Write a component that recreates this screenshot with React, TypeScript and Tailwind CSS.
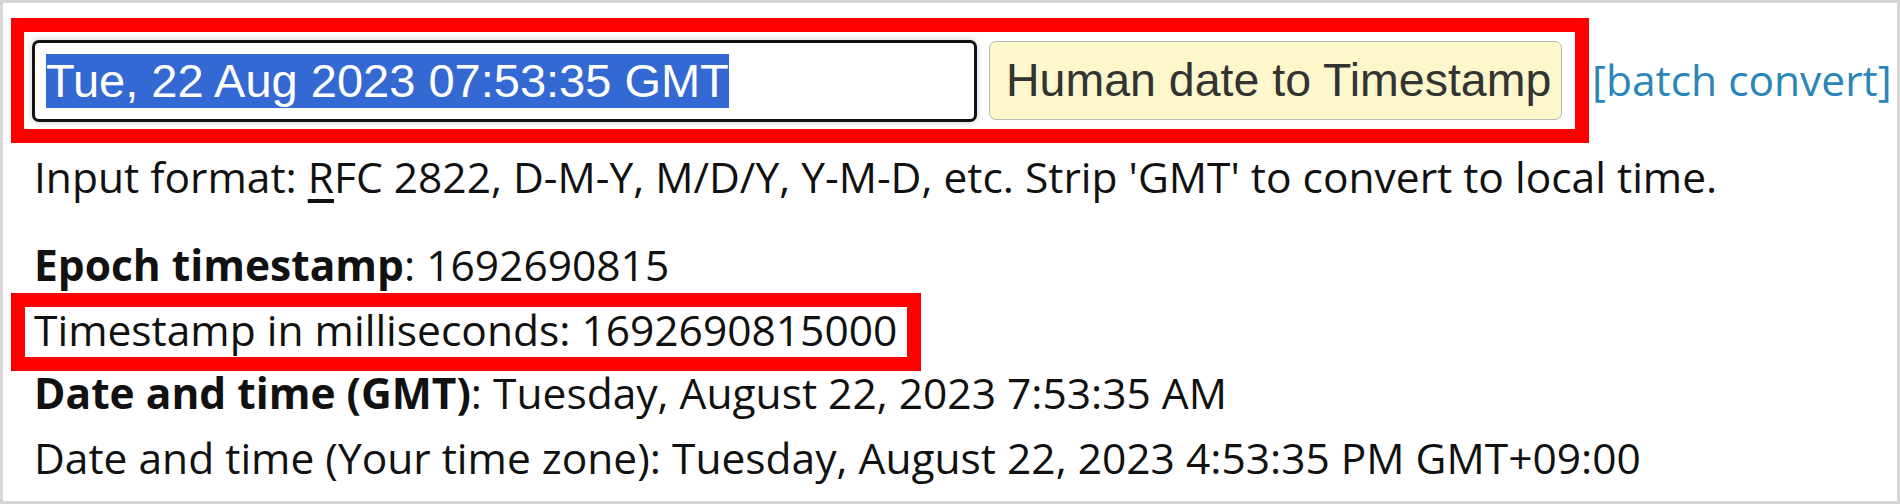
export default function App() {
  const body = { fontFamily: '"Open Sans", "Noto Sans", sans-serif' };
  const arial = { fontFamily: '"Liberation Sans", Arial, sans-serif' };

  return (
    <div className="w-[1900px] h-[504px] border-[3px] border-[#d6d6d6] bg-white pl-[8px] pt-[15px] overflow-hidden text-[#111]" style={body}>
      {/* converter form */}
      <div className="flex items-center">
        <div className="flex items-center border-[14px] border-l-[13px] border-[#ff0000] w-[1578px] h-[125px] pl-[8px] pr-[12px]">
          <div className="w-[945px] h-[82px] border-[3px] border-[#111] rounded-[7px] bg-white pl-[11px] flex items-center shadow-[0_0_6px_rgba(0,0,0,0.22)]" style={arial}>
            <span className="bg-[#3469d4] text-white text-[47px] leading-[54px] whitespace-nowrap">Tue, 22 Aug 2023 07:53:35 GMT</span>
          </div>
          <button className="ml-[12px] w-[573px] h-[79px] border border-[#b8b8b8] rounded-[7px] bg-[#fdf7cb] text-[#333] text-[46.5px] leading-none pl-[16px] text-left whitespace-nowrap" style={arial}>
            Human date to Timestamp
          </button>
        </div>
        <a className="ml-[3px] text-[42.5px] leading-none text-[#2a86b8] whitespace-nowrap">[batch convert]</a>
      </div>

      <div className="pl-[23px] text-[42.5px] leading-[65px] whitespace-nowrap">
        <div className="mt-[1px]">
          Input format: <span className="underline underline-offset-[6px]">R</span>FC 2822, D-M-Y, M/D/Y, Y-M-D, etc. Strip 'GMT' to convert to local time.
        </div>
        <div className="mt-[23px]">
          <b className="font-bold">Epoch timestamp</b>: 1692690815
        </div>
        <div className="w-fit -ml-[23px] -mt-[4px] -mb-[11px] border-[14px] border-[#ff0000] pl-[9px] pr-[10px] pt-[2px] pb-[6px] leading-[42px]">
          Timestamp in milliseconds: 1692690815000
        </div>
        <div>
          <b className="font-bold">Date and time (GMT)</b>: Tuesday, August 22, 2023 7:53:35 AM
        </div>
        <div>
          Date and time (Your time zone): Tuesday, August 22, 2023 4:53:35 PM GMT+09:00
        </div>
      </div>
    </div>
  );
}
